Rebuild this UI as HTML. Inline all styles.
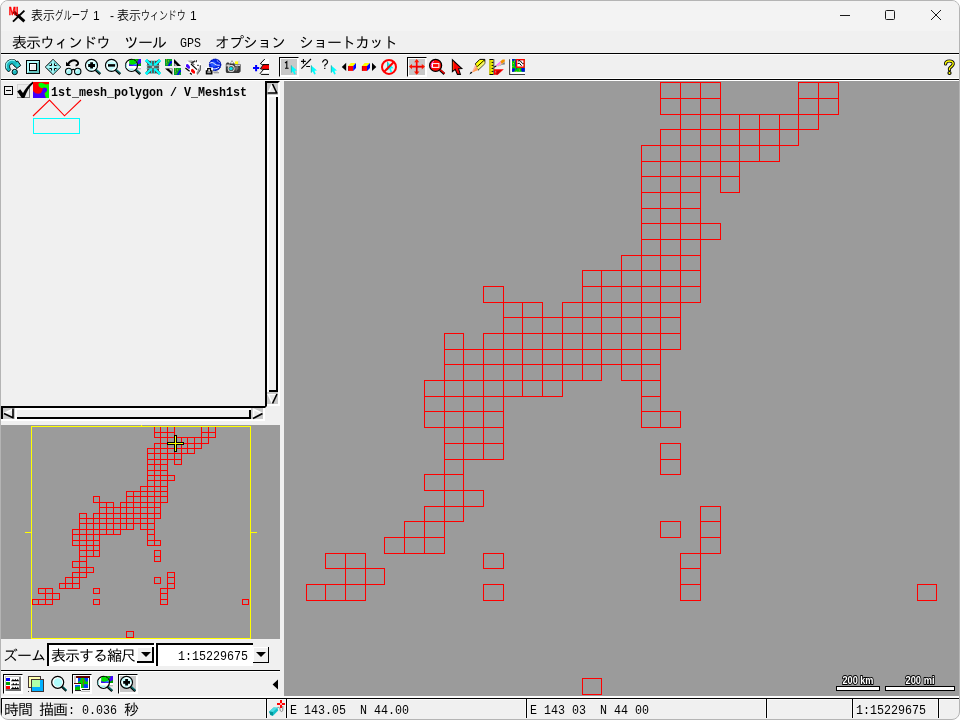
<!DOCTYPE html>
<html lang="ja"><head><meta charset="utf-8"><title>表示グループ 1 - 表示ウィンドウ 1</title>
<style>
html,body{margin:0;padding:0;background:#fff;}
body{width:960px;height:720px;overflow:hidden;position:relative;font-family:"Liberation Sans",sans-serif;}
#win{position:absolute;left:0;top:0;width:958px;height:718px;border:1px solid #b4b4b4;border-radius:8px;background:#f0f0f0;overflow:hidden;}
.a{position:absolute;}
.g{position:absolute;font-family:"Liberation Mono","IPAGothic",monospace;font-size:15px;line-height:15px;letter-spacing:-1px;white-space:pre;color:#000;}
.l{display:inline-block;font-size:13px;letter-spacing:0;transform:translateY(-1px) scaleX(.8974);transform-origin:0 50%;}
.t{position:absolute;font-family:"Liberation Sans","Noto Sans CJK JP",sans-serif;font-weight:350;font-size:12px;line-height:16px;white-space:pre;color:#000;}
svg{position:absolute;overflow:visible;}
.ic{position:absolute;width:16px;height:16px;}
.k{display:inline-block;transform-origin:0 50%;}
.pr{position:absolute;width:18px;height:18px;background:#fff;border-left:1px solid #000;border-top:1px solid #000;border-right:1px solid #fff;border-bottom:1px solid #fff;box-sizing:content-box;}
.pr i{position:absolute;left:1px;top:1px;width:16px;height:16px;background:#c8c8c8;}
</style></head><body>
<div id="win">
<!-- coordinates inside #win are offset by 1px (border) : use wrapper shifted -1 -->
<div class="a" id="o" style="left:-1px;top:-1px;width:960px;height:720px;will-change:transform;">

<!-- title bar -->
<div class="a" style="left:0;top:0;width:960px;height:31px;background:#f3f3f3;"></div>
<div class="t" style="left:31px;top:8px;">表示<span class="k" style="transform:scaleX(.70)">グループ</span></div><div class="t" style="left:93px;top:8px;">1</div><div class="t" style="left:110px;top:8px;">-</div><div class="t" style="left:117px;top:8px;">表示<span class="k" style="transform:scaleX(.745)">ウィンドウ</span></div><div class="t" style="left:190px;top:8px;">1</div>
<svg style="left:8px;top:6px;" width="18" height="18" viewBox="0 0 18 18">
 <path d="M5.5 5.6 L16.4 15.4" stroke="#000" stroke-width="2.8" fill="none"/><path d="M16.4 4.6 L5 15.6" stroke="#000" stroke-width="1.9" fill="none"/>
 <text x="0.8" y="8.9" font-family="Liberation Sans, sans-serif" font-weight="bold" font-size="11" fill="#f00" stroke="#f00" stroke-width=".3" textLength="9.6" lengthAdjust="spacingAndGlyphs">MI</text>
</svg>
<svg style="left:835px;top:5px;" width="115" height="22" viewBox="0 0 115 22" fill="none" stroke="#1a1a1a" stroke-width="1">
 <path d="M5 10.5H15"/>
 <rect x="50.5" y="5.5" width="9" height="9" rx="1"/>
 <path d="M96 5L106 15M106 5L96 15"/>
</svg>

<!-- menu bar -->
<div class="g" style="left:12px;top:37px;">表示ウィンドウ</div>
<div class="g" style="left:124px;top:37px;">ツール</div>
<div class="g" style="left:180px;top:37px;"><span class="l">GPS</span></div>
<div class="g" style="left:215px;top:37px;">オプション</div>
<div class="g" style="left:299px;top:37px;">ショートカット</div>

<!-- toolbar frame -->
<div class="a" style="left:1px;top:53px;width:958px;height:1px;background:#000;"></div>
<div class="a" style="left:1px;top:54px;width:958px;height:1px;background:#fff;"></div>
<div class="a" style="left:1px;top:78px;width:958px;height:1px;background:#fff;"></div>
<div class="a" style="left:1px;top:79px;width:958px;height:1px;background:#000;"></div>
<div class="a" style="left:1px;top:80px;width:958px;height:1px;background:#fff;"></div>
<div class="pr" style="left:279px;top:57px;"><i></i></div>
<div class="pr" style="left:407px;top:57px;"><i></i></div>

<!-- layer list -->
<svg style="left:0;top:81px;" width="284" height="345" viewBox="0 81 284 345" shape-rendering="crispEdges">
 <!-- tree box -->
 <rect x="4.5" y="86.5" width="8" height="8" fill="#f0f0f0" stroke="#000"/>
 <path d="M6 90.5H11" stroke="#000"/>
 <!-- checkbox -->
 <rect x="17" y="84" width="13" height="14" fill="#ececec"/>
 <path d="M17.5 97V84.5H30" stroke="#d4d4d4" fill="none"/>
 <path d="M17 97.5H29.5V85" stroke="#808080" fill="none"/>
 <path d="M17.2 91.6 L20.2 89.2 L23 93 C25.4 88.6 28.6 84.4 32.8 81.4 L33.2 83.6 C29.4 86.8 26.8 91.6 24.4 98 L21.8 98 Z" fill="#000" shape-rendering="auto"/>
 <!-- layer icon -->
 <g shape-rendering="auto">
 <rect x="33" y="82" width="16" height="16" fill="#f00"/>
 <path d="M33 91 C36 94.5 39 94 41 93 L42.5 90 C42 88.5 43.5 87.5 45 87.5 L47 88.5 L47 91 L44.5 93.5 L46 98 L33 98Z" fill="#4000ff"/>
 <path d="M38.5 84 C39.5 82.5 42 82.3 43.5 83.5 L45.5 84.5 L49 84 L49 98 L46 98 L44.5 93.5 L47 91 L47 88.5 L45 87.5 C43.5 87.5 42.5 88.5 41.5 88 C39.5 87.5 38 85.5 38.5 84Z" fill="#00ff00"/>
 </g>
 <!-- legend samples -->
 <path d="M33 116 L49.5 100 L64.5 115.8 L81 100" stroke="#f00" stroke-width="1.1" fill="none" shape-rendering="auto"/>
 <rect x="33.5" y="118.5" width="46" height="15" fill="none" stroke="#0ff"/>

 <!-- vertical scrollbar -->
 <rect x="265" y="81" width="15" height="325" fill="#fff"/>
 <rect x="265" y="81" width="13" height="323" fill="#000"/>
 <path d="M278 81 h2 l-2 2z" fill="#000" shape-rendering="auto"/>
 <rect x="267" y="83" width="11" height="321" fill="#c8c8c8"/>
 <!-- slider -->
 <rect x="267" y="95" width="11" height="297" fill="#fff"/>
 <rect x="269" y="97" width="9" height="295" fill="#000"/>
 <rect x="269" y="97" width="7" height="293" fill="#f0f0f0"/>
 <g shape-rendering="auto">
 <path d="M272.5 84 L268 93.5 H277Z" fill="#e8e8e8"/><path d="M272.5 84 L268 93.5" stroke="#fff" stroke-width="1.6"/>
 <path d="M272.5 84 L277 93.5 M267.5 93 H277.5" stroke="#000" stroke-width="1.6"/>
 <path d="M268 394 L272.5 403.5 L277 394Z" fill="#e8e8e8"/><path d="M268 394 L272.5 403.5" stroke="#fff" stroke-width="1.6"/>
 <path d="M267.5 394.5 H277.5" stroke="#fff" stroke-width="1.2"/>
 <path d="M277 394 L272.5 403.5" stroke="#000" stroke-width="1.6"/>
 </g>

 <!-- horizontal scrollbar -->
 <rect x="1" y="406" width="264" height="15" fill="#fff"/>
 <rect x="1" y="406" width="262" height="13" fill="#000"/>
 <path d="M263 406 h4 l-2 2 h-2z" fill="#000" shape-rendering="auto"/>
 <rect x="265" y="400" width="2" height="6" fill="#000"/>
 <rect x="3" y="408" width="260" height="11" fill="#c8c8c8"/>
 <rect x="15" y="408" width="236" height="11" fill="#fff"/>
 <rect x="17" y="410" width="234" height="9" fill="#000"/>
 <rect x="17" y="410" width="232" height="7" fill="#f0f0f0"/>
 <g shape-rendering="auto">
 <path d="M13.5 409 L4 413.5 L13.5 418Z" fill="#e8e8e8"/><path d="M13.5 409 L4 413.5" stroke="#fff" stroke-width="1.6"/>
 <path d="M4 413.5 L13.5 418 M13 408.5 V418.5" stroke="#000" stroke-width="1.6"/>
 <path d="M253 409 L262.5 413.5 L253 418.5Z" fill="#e8e8e8"/><path d="M253 409 L262.5 413.5 M253.5 408.5 V418" stroke="#fff" stroke-width="1.6"/>
 <path d="M262.5 413.5 L253 418.5" stroke="#000" stroke-width="1.6"/>
 </g>
</svg>
<div class="g" style="left:51px;top:86px;font-weight:bold;"><span class="l">1st_mesh_polygon / V_Mesh1st</span></div>

<!-- overview -->
<div class="a" style="left:1px;top:425px;width:279px;height:214px;background:#9b9b9b;"></div>
<svg style="left:1px;top:425px;" width="279" height="214" viewBox="0 0 279 214" shape-rendering="crispEdges">
 <path d="M153 1.5H174M200 1.5H215M153 7.5H174M200 7.5H215M153 12.5H215M153 18.5H208M146 23.5H201M146 28.5H194M146 34.5H181M146 39.5H167M173 39.5H181M146 45.5H167M146 50.5H174M146 55.5H174M139 61.5H167M125 66.5H167M92 71.5H99M125 71.5H167M92 77.5H113M119 77.5H167M98 82.5H160M78 88.5H86M92 88.5H160M78 93.5H160M78 98.5H154M71 104.5H133M139 104.5H154M71 109.5H120M146 109.5H154M71 115.5H99M146 115.5H160M71 120.5H99M146 120.5H160M78 125.5H99M153 125.5H160M78 131.5H99M153 131.5H160M71 136.5H86M153 136.5H160M71 142.5H93M71 147.5H93M166 147.5H174M64 152.5H86M153 152.5H160M166 152.5H174M58 158.5H79M153 158.5H160M166 158.5H174M37 163.5H52M58 163.5H79M92 163.5H99M159 163.5H174M37 168.5H59M92 168.5H99M159 168.5H167M31 174.5H59M92 174.5H99M159 174.5H167M241 174.5H248M31 179.5H52M92 179.5H99M159 179.5H167M241 179.5H248M125 206.5H133M125 212.5H133M31.5 174V180M37.5 163V169M37.5 174V180M44.5 163V180M51.5 163V180M58.5 158V164M58.5 168V175M64.5 152V164M71.5 104V121M71.5 136V143M71.5 147V164M78.5 88V164M85.5 88V153M92.5 71V78M92.5 88V132M92.5 142V148M92.5 163V169M92.5 174V180M98.5 71V132M98.5 163V169M98.5 174V180M105.5 77V110M112.5 77V110M119.5 77V110M125.5 66V105M125.5 206V213M132.5 66V105M132.5 206V213M139.5 61V105M146.5 23V121M153.5 1V13M153.5 18V121M153.5 125V137M153.5 152V159M159.5 1V94M159.5 115V121M159.5 125V137M159.5 152V159M159.5 163V180M166.5 1V78M166.5 147V180M173.5 1V40M173.5 50V56M173.5 147V164M180.5 12V40M186.5 12V29M193.5 12V29M200.5 1V24M207.5 1V19M214.5 1V13M241.5 174V180M247.5 174V180" stroke="#f00" fill="none"/>
 <path d="M30.5 1V214M249.5 1V214M30 1.5H250M30 213.5H250M24 107.5H30M250 107.5H256M140.5 0V1M154.5 213V214" stroke="#ff0" fill="none"/>
 <path d="M173 10H176V17H183V20H176V27H173V20H166V17H173Z" fill="#000"/>
 <path d="M174 11H175V18H182V19H175V26H174V19H167V18H174Z" fill="#ff0"/>
</svg>

<!-- zoom row -->
<div class="g" style="left:3px;top:650px;">ズーム</div>
<svg style="left:0;top:640px;" width="284" height="60" viewBox="0 640 284 60" shape-rendering="crispEdges">
 <!-- combo1 -->
 <rect x="47" y="643" width="109" height="23" fill="#fff"/>
 <rect x="47" y="643" width="107" height="23" fill="#000"/>
 <rect x="49" y="645" width="105" height="21" fill="#fff"/>
 <rect x="137" y="647" width="17" height="16" fill="#000"/>
 <rect x="137" y="647" width="15" height="14" fill="#fff"/>
 <rect x="138" y="648" width="14" height="13" fill="#f0f0f0"/>
 <path d="M141 652H151L146 657Z" fill="#000" shape-rendering="auto"/>
 <!-- combo2 -->
 <rect x="156" y="643" width="97" height="23" fill="#000"/>
 <rect x="158" y="645" width="95" height="21" fill="#fff"/>
 <rect x="253" y="647" width="16" height="16" fill="#000"/>
 <rect x="253" y="647" width="15" height="15" fill="#fff"/>
 <rect x="254" y="648" width="14" height="14" fill="#f0f0f0"/>
 <path d="M256 652H266L261 657Z" fill="#000" shape-rendering="auto"/>
 <!-- separator -->
 <rect x="1" y="670" width="279" height="1" fill="#000"/>
 <rect x="1" y="671" width="279" height="1" fill="#fff"/>
 <path d="M278 679.5 V689.5 L272.6 684.5Z" fill="#000" shape-rendering="auto"/>
</svg>
<div class="g" style="left:51px;top:650px;">表示する縮尺</div>
<div class="g" style="left:178px;top:650px;"><span class="l">1:15229675</span></div>
<div class="pr" style="left:3px;top:674px;"></div>
<div class="pr" style="left:72px;top:674px;"></div>
<div class="pr" style="left:118px;top:674px;"><i></i></div>

<!-- map -->
<div class="a" style="left:284px;top:81px;width:675px;height:615px;background:#9b9b9b;"></div>
<svg style="left:284px;top:81px;" width="675" height="615" viewBox="0 0 675 615" shape-rendering="crispEdges">
 <path d="M376 1.5H437M514 1.5H555M376 17.5H437M514 17.5H555M376 33.5H555M376 48.5H535M357 64.5H515M357 80.5H496M357 95.5H456M357 111.5H417M436 111.5H456M357 127.5H417M357 142.5H437M357 158.5H437M337 174.5H417M298 189.5H417M199 205.5H220M298 205.5H417M199 221.5H259M278 221.5H417M219 236.5H397M160 252.5H180M199 252.5H397M160 268.5H397M160 283.5H377M140 299.5H318M337 299.5H377M140 315.5H279M357 315.5H377M140 330.5H220M357 330.5H397M140 346.5H220M357 346.5H397M160 362.5H220M376 362.5H397M160 378.5H220M376 378.5H397M140 393.5H180M376 393.5H397M140 409.5H200M140 425.5H200M416 425.5H437M120 440.5H180M376 440.5H397M416 440.5H437M100 456.5H161M376 456.5H397M416 456.5H437M41 472.5H82M100 472.5H161M199 472.5H220M396 472.5H437M41 487.5H101M199 487.5H220M396 487.5H417M22 503.5H101M199 503.5H220M396 503.5H417M633 503.5H653M22 519.5H82M199 519.5H220M396 519.5H417M633 519.5H653M298 597.5H318M298 613.5H318M22.5 503V520M41.5 472V488M41.5 503V520M61.5 472V520M81.5 472V520M100.5 456V473M100.5 487V504M120.5 440V473M140.5 299V347M140.5 393V410M140.5 425V473M160.5 252V473M179.5 252V441M199.5 205V222M199.5 252V379M199.5 409V426M199.5 472V488M199.5 503V520M219.5 205V379M219.5 472V488M219.5 503V520M238.5 221V316M258.5 221V316M278.5 221V316M298.5 189V300M298.5 597V614M317.5 189V300M317.5 597V614M337.5 174V300M357.5 64V347M376.5 1V34M376.5 48V347M376.5 362V394M376.5 440V457M396.5 1V269M396.5 330V347M396.5 362V394M396.5 440V457M396.5 472V520M416.5 1V222M416.5 425V520M436.5 1V112M436.5 142V159M436.5 425V473M455.5 33V112M475.5 33V81M495.5 33V81M514.5 1V65M534.5 1V49M554.5 1V34M633.5 503V520M652.5 503V520" stroke="#f00" fill="none"/>
 <rect x="552.5" y="605.5" width="43" height="4" fill="#fff" stroke="#000"/>
 <rect x="601.5" y="605.5" width="69" height="4" fill="#fff" stroke="#000"/>
 <g font-family="Liberation Sans, sans-serif" font-weight="bold" font-size="11" text-anchor="middle" shape-rendering="auto" fill="#fff" stroke="#000" stroke-width="2" paint-order="stroke" stroke-linejoin="round">
  <text x="574" y="602.5" textLength="31" lengthAdjust="spacingAndGlyphs">200 km</text>
  <text x="636" y="602.5" textLength="29" lengthAdjust="spacingAndGlyphs">200 mi</text>
 </g>
</svg>

<!-- status bar -->
<div class="a" style="left:1px;top:696px;width:958px;height:2px;background:#fcfcfc;"></div>
<div class="a" style="left:1px;top:699px;width:958px;height:1px;background:#fafafa;"></div>
<div class="a" style="left:1px;top:698px;width:958px;height:1px;background:#000;"></div>
<div class="a" style="left:1px;top:699px;width:1px;height:19px;background:#000;"></div>
<div class="a" style="left:2px;top:699px;width:1px;height:19px;background:#fafafa;"></div>
<div class="a" style="left:265px;top:699px;width:3px;height:19px;background:#fafafa;"></div>
<div class="a" style="left:266px;top:699px;width:1px;height:19px;background:#000;"></div>
<div class="a" style="left:285px;top:699px;width:3px;height:19px;background:#fafafa;"></div>
<div class="a" style="left:286px;top:699px;width:1px;height:19px;background:#000;"></div>
<div class="a" style="left:525px;top:699px;width:3px;height:19px;background:#fafafa;"></div>
<div class="a" style="left:526px;top:699px;width:1px;height:19px;background:#000;"></div>
<div class="a" style="left:765px;top:699px;width:3px;height:19px;background:#fafafa;"></div>
<div class="a" style="left:766px;top:699px;width:1px;height:19px;background:#000;"></div>
<div class="a" style="left:851px;top:699px;width:3px;height:19px;background:#fafafa;"></div>
<div class="a" style="left:852px;top:699px;width:1px;height:19px;background:#000;"></div>
<div class="a" style="left:937px;top:699px;width:3px;height:19px;background:#fafafa;"></div>
<div class="a" style="left:938px;top:699px;width:1px;height:19px;background:#000;"></div>
<div class="g" style="left:4px;top:704px;">時間</div><div class="g" style="left:39px;top:704px;">描画</div><div class="g" style="left:68px;top:704px;"><span class="l">:</span></div>
<div class="g" style="left:82px;top:704px;"><span class="l">0.036</span></div>
<div class="g" style="left:124px;top:704px;">秒</div>
<div class="g" style="left:290px;top:704px;"><span class="l">E 143.05  N 44.00</span></div>
<div class="g" style="left:530px;top:704px;"><span class="l">E 143 03  N 44 00</span></div>
<div class="g" style="left:856px;top:704px;"><span class="l">1:15229675</span></div>

<!-- ===== toolbar icons (16x16 at y=59) ===== -->
<!-- 1 redraw -->
<svg class="ic" style="left:5px;top:59px" viewBox="0 0 16 16">
 <path d="M3.6 13 L1.2 10.4 C-0.2 7.4 0.2 3.8 2.8 1.8 C5.2 0 8.6 0 10.6 1.4 L11.8 2.8 L12.6 1.8 L15.8 6.5 L11.6 9.6 L10.8 8 L9 7 C8.6 5.2 6.8 4.2 5.4 5.4 C4.2 6.6 4.4 8.8 5.8 10.6 Z" fill="#fff" stroke="#fff" stroke-width="2.4" stroke-linejoin="round"/>
 <circle cx="9.7" cy="13" r="3.6" fill="#fff"/>
 <path d="M3.6 13 L1.2 10.4 C-0.2 7.4 0.2 3.8 2.8 1.8 C5.2 0 8.6 0 10.6 1.4 L11.8 2.8 L12.6 1.8 L15.8 6.5 L11.6 9.6 L10.8 8 L9 7 C8.6 5.2 6.8 4.2 5.4 5.4 C4.2 6.6 4.4 8.8 5.8 10.6 Z" fill="#18b8c0" stroke="#000" stroke-width=".9" stroke-linejoin="round"/>
 <path d="M1.6 9.4 C0.8 6.4 1.6 3.6 3.8 2.2 C5.8 1 8.2 1 9.8 2" stroke="#8cf0f0" stroke-width="1.3" fill="none"/>
 <path d="M12.6 3 L14.6 6.4 L11.8 8.4 L11.4 6.6 L9.8 6.4 L11.8 4.6Z" fill="#30d0d0"/>
 <circle cx="9.7" cy="13" r="2.7" fill="#18b8c0" stroke="#000" stroke-width=".9"/>
 <path d="M7.7 13 L9.6 10.9 L11 11 Z" fill="#a0f4f4"/>
</svg>
<!-- 2 full view -->
<svg class="ic" style="left:25px;top:59px" viewBox="0 0 16 16" shape-rendering="crispEdges">
 <rect x="1" y="1" width="14" height="14" fill="#000"/>
 <rect x="2" y="2" width="12" height="12" fill="#66c4c0"/>
 <path d="M2 2H14L12 4H4V12L2 14Z" fill="#b4fcfc"/>
 <rect x="4" y="4" width="8" height="8" fill="#000"/>
 <rect x="5" y="5" width="6" height="6" fill="#fff"/>
 <rect x="6" y="6" width="5" height="5" fill="#f0f0f0"/>
</svg>
<!-- 3 pan diamond -->
<svg class="ic" style="left:45px;top:59px" viewBox="0 0 16 16">
 <path d="M8 0.4 L15.7 8 L8 15.6 L0.3 8Z" fill="#84e8e8" stroke="#000" stroke-width="1"/>
 <path d="M8 1 L15 8 L8 15Z" fill="#68d0d0"/><path d="M8 1.5 L8 14.5 M1.5 8 L14.5 8" stroke="#b4fcfc" stroke-width="1.4"/>
 <g fill="none" stroke="#000" stroke-width="1">
  <path d="M4.5 6.5 H6.5 V4.5"/><path d="M11.5 6.5 H9.5 V4.5"/><path d="M4.5 9.5 H6.5 V11.5"/><path d="M11.5 9.5 H9.5 V11.5"/>
 </g>
 <g fill="#f0f0f0"><rect x="5" y="5" width="1" height="1"/><rect x="10" y="5" width="1" height="1"/><rect x="5" y="10" width="1" height="1"/><rect x="10" y="10" width="1" height="1"/></g>
</svg>
<!-- 4 previous view -->
<svg class="ic" style="left:65px;top:59px" viewBox="0 0 16 16">
 <path d="M3 5.6 C4.5 1.2 10 0 12.4 2.6 C14 4.4 13 6.2 10.6 6.6" fill="none" stroke="#000" stroke-width="1.9"/>
 <path d="M1 2.8 V7 H5.8Z" fill="#000"/>
 <path d="M6 11.8 C7 9.8 9.4 9.8 10.4 11.8" fill="none" stroke="#000" stroke-width="1.3"/>
 <circle cx="3.7" cy="12.4" r="3.2" fill="#a4f4f4" stroke="#000" stroke-width="1.1"/>
 <circle cx="12.7" cy="12.4" r="3.2" fill="#a4f4f4" stroke="#000" stroke-width="1.1"/>
 <path d="M2.2 12.4 A1.6 1.6 0 0 1 3.8 10.8 M11.2 12.4 A1.6 1.6 0 0 1 12.8 10.8" stroke="#fff" stroke-width="1" fill="none"/>
</svg>
<!-- 5 zoom in -->
<svg class="ic" style="left:85px;top:59px" viewBox="0 0 16 16">
 <path d="M10.6 10.8 L15.2 15.2" stroke="#000" stroke-width="2.4"/>
 <path d="M11.3 10.5 L15.6 14.6" stroke="#10a8a8" stroke-width="1.5" stroke-dasharray="1 .5"/>
 <circle cx="6.5" cy="6.4" r="6" fill="#c0fcfc" stroke="#000" stroke-width="1.2"/>
 <circle cx="6.5" cy="6.4" r="4.4" fill="none" stroke="#fff" stroke-width="1.2" stroke-dasharray="6 3"/>
 <path d="M3.2 6.5 H10 M6.6 3.2 V9.6" stroke="#000" stroke-width="2.8"/>
</svg>
<!-- 6 zoom out -->
<svg class="ic" style="left:105px;top:59px" viewBox="0 0 16 16">
 <path d="M10.6 10.8 L15.2 15.2" stroke="#000" stroke-width="2.4"/>
 <path d="M11.3 10.5 L15.6 14.6" stroke="#10a8a8" stroke-width="1.5" stroke-dasharray="1 .5"/>
 <circle cx="6.5" cy="6.4" r="6" fill="#c0fcfc" stroke="#000" stroke-width="1.2"/>
 <circle cx="6.5" cy="6.4" r="4.4" fill="none" stroke="#fff" stroke-width="1.2" stroke-dasharray="6 3"/>
 <path d="M3 6.4 H10.1" stroke="#000" stroke-width="2.5"/>
</svg>
<!-- 7 zoom to layer -->
<svg class="ic" style="left:125px;top:59px" viewBox="0 0 16 16">
 <rect x="9" y="0" width="7" height="7" fill="#00a000"/>
 <path d="M16 0 V4 L13 5.5 L12 3 L14 0Z" fill="#4000ff"/>
 <path d="M9.5 1 L11 0 L12.5 2 L11 4Z" fill="#00e000"/>
 <rect x="9" y="7" width="7" height="2.4" fill="#fff"/>
 <rect x="10" y="9.4" width="6" height=".8" fill="#909090"/>
 <path d="M10.6 10.8 L15.2 15.2" stroke="#000" stroke-width="2.4"/>
 <path d="M11.3 10.5 L15.6 14.6" stroke="#10a8a8" stroke-width="1.5" stroke-dasharray="1 .5"/>
 <circle cx="6.5" cy="6.4" r="6" fill="#fff" stroke="#000" stroke-width="1.2"/>
 <path d="M4.2 1.4 C6 0.6 8.5 0.6 10.3 2.2 C11.6 3.6 12 5 11.9 7 L4.2 7Z" fill="#00e000"/>
 <path d="M4.2 4.5 C5.5 6 7.5 6.2 9.5 5.2 L11 4.6 L11.9 7 H4.2Z" fill="#4000ff"/>
 <path d="M7 5.8 C8.5 6 10 5.4 11 4.4 L11.6 5.8 C10 6.6 8.4 6.8 7 5.8Z" fill="#20a0ff"/>
 <path d="M1.4 4.5 C1 6 1 7.5 1.6 9 M3 10.2 H8.6" stroke="#7ce0e0" stroke-width="1" fill="none"/>
 <path d="M2.4 9.2 C3.4 11.4 6.2 12.2 8.6 11.4 C6.5 10.8 4 10.6 2.4 9.2Z" fill="#c0fcfc"/>
</svg>
<!-- 8 zoom to extents arrows -->
<svg class="ic" style="left:145px;top:59px" viewBox="0 0 16 16">
 <rect x="2.2" y="1.8" width="11.8" height="12.6" fill="#5c4040"/>
 <path d="M1.4 1.4 L14.6 14.6 M14.6 1.4 L1.4 14.6" stroke="#5c4040" stroke-width="3"/>
 <g transform=""><path d="M0.9 0.9 L6.8 6.8" stroke="#00ffff" stroke-width="2.3"/><path d="M0.4 2.4 L2.4 0.4" stroke="#00ffff" stroke-width="1.4"/><rect x="6.2" y="1.6" width="1" height="5.6" fill="#00ffff"/><rect x="1.6" y="6.2" width="5.6" height="1" fill="#50b8b8"/></g><g transform="translate(16,0) scale(-1,1)"><path d="M0.9 0.9 L6.8 6.8" stroke="#00ffff" stroke-width="2.3"/><path d="M0.4 2.4 L2.4 0.4" stroke="#00ffff" stroke-width="1.4"/><rect x="6.2" y="1.6" width="1" height="5.6" fill="#00ffff"/><rect x="1.6" y="6.2" width="5.6" height="1" fill="#50b8b8"/></g><g transform="translate(0,16) scale(1,-1)"><path d="M0.9 0.9 L6.8 6.8" stroke="#00ffff" stroke-width="2.3"/><path d="M0.4 2.4 L2.4 0.4" stroke="#00ffff" stroke-width="1.4"/><rect x="6.2" y="1.6" width="1" height="5.6" fill="#00ffff"/><rect x="1.6" y="6.2" width="5.6" height="1" fill="#50b8b8"/></g><g transform="translate(16,16) scale(-1,-1)"><path d="M0.9 0.9 L6.8 6.8" stroke="#00ffff" stroke-width="2.3"/><path d="M0.4 2.4 L2.4 0.4" stroke="#00ffff" stroke-width="1.4"/><rect x="6.2" y="1.6" width="1" height="5.6" fill="#00ffff"/><rect x="1.6" y="6.2" width="5.6" height="1" fill="#50b8b8"/></g>
 <rect x="7.2" y="7.2" width="1.6" height="1.6" fill="#fff"/>
</svg>
<!-- 9 tiles -->
<svg class="ic" style="left:165px;top:59px" viewBox="0 0 16 16">
 <rect x="0" y="0" width="7" height="7" fill="#00a030"/>
 <path d="M7 2 L5.2 2.6 L4 5 L2.6 7 H4.6 L5.4 5.2 L7 3.6Z" fill="#0000ff"/>
 <path d="M0 0 H3 L0 4Z" fill="#009020"/>
 <g fill="#d0c000"><rect x="1" y="0.4" width="1" height="1"/><rect x="3" y="1.4" width="1" height="1"/><rect x="1" y="2.6" width="1" height="1"/><rect x="1.4" y="4.6" width="1" height="1"/></g>
 <g transform="translate(9,9)">
 <rect x="0" y="0" width="7" height="7" fill="#00a030"/>
 <path d="M7 2 L5.2 2.6 L4 5 L2.6 7 H4.6 L5.4 5.2 L7 3.6Z" fill="#0000ff"/>
 <path d="M0 0 H3 L0 4Z" fill="#009020"/>
 <g fill="#d0c000"><rect x="1" y="0.4" width="1" height="1"/><rect x="3" y="1.4" width="1" height="1"/><rect x="1" y="2.6" width="1" height="1"/><rect x="1.4" y="4.6" width="1" height="1"/></g>
 </g>
 <path d="M9 0 L16 7 H9Z" fill="#000"/>
 <path d="M9.6 4.4 L12.2 6.8 H9.6Z" fill="#fff" stroke="#b0b0b0" stroke-width=".5"/>
 <path d="M0 9.4 H7.4 V16Z" fill="#000"/>
 <path d="M4.2 9.8 H6.8 V12.6Z" fill="#fff" stroke="#b0b0b0" stroke-width=".5"/>
</svg>
<!-- 10 3D glasses -->
<svg class="ic" style="left:185px;top:59px" viewBox="0 0 16 16">
 <path d="M0.2 6.2 L2.4 2 L7.4 0.4 L11.6 1 L16 5 L16 12 L12.6 16 L6.4 16 L0.2 9.4Z" fill="#fff"/>
 <path d="M2.4 1.8 L7 1.2 L9.4 3.2 L6.2 4.6Z" fill="#a8a8a8"/>
 <path d="M6.4 4.2 L10 1.8" stroke="#303030" stroke-width="1.6"/>
 <path d="M6 5 L12 10.6" stroke="#000" stroke-width="1.1"/>
 <path d="M7.6 4.2 L9.2 5.8 M11.4 1.2 L11.2 3.2 M12.2 6.3 L13.8 6.3" stroke="#000" stroke-width="1"/>
 <path d="M1 5.6 L2.8 5 L5 7.4 L5 9.6 L3.2 9.8 L1 7.6Z" fill="#4808ff"/>
 <path d="M6 10.4 L7.8 9.8 L10 12.2 L10 14.4 L8.2 14.6 L6 12.4Z" fill="#ff0000"/>
 <path d="M0.4 9 L4.6 12.2" stroke="#000" stroke-width="1.3"/>
 <path d="M5 14 L6.8 15.6" stroke="#000" stroke-width="1.3"/>
 <path d="M15.4 6.2 L15.2 11 L12 15.4" stroke="#505050" stroke-width="1.2" fill="none"/>
 <path d="M13.6 9.6 C13.8 11.6 13 13.4 11.8 14.6" stroke="#909090" stroke-width="1.4" fill="none"/>
</svg>
<!-- 11 globe / print -->
<svg class="ic" style="left:205px;top:59px" viewBox="0 0 16 16">
 <path d="M7 13 H12.6 L13.8 13.8 H9" stroke="#909090" stroke-width="1" fill="none"/>
 <circle cx="10.1" cy="5.8" r="6.1" fill="#0828e8"/>
 <circle cx="10.1" cy="5.8" r="5.7" fill="none" stroke="#001088" stroke-width=".9" stroke-dasharray="1.4 1"/>
 <circle cx="8.6" cy="5.2" r="2.6" fill="#2858ff"/>
 <path d="M4.8 4.4 C6.4 3 8 3.4 9.2 4.6 C10.4 5.8 12 6.4 14.8 6.2 M7.4 9.8 C9.6 10.2 12.4 9.6 14 8.2" stroke="#e8ecff" stroke-width="1" fill="none"/>
 <path d="M11.8 1.4 L13.2 2.6 M13.6 3 L14.6 3.6" stroke="#c8d4ff" stroke-width=".9" fill="none"/>
 <rect x="0.2" y="8.4" width="7.8" height="7.6" fill="#fff"/>
 <path d="M2.7 9.6 H5.5 V11.8 H6.9 V14.8 H1.3 V11.8 H2.7Z" fill="#fff" stroke="#000" stroke-width="1.2"/>
 <path d="M2.4 13.3 H5.8" stroke="#fff" stroke-width=".9"/>
 <path d="M1.3 12.6 H6.9 V14.8 H1.3Z" fill="#000"/>
 <path d="M2.3 13.6 H5.9" stroke="#d0d0d0" stroke-width=".8"/>
</svg>
<!-- 12 camera -->
<svg class="ic" style="left:225px;top:59px" viewBox="0 0 16 16">
 <path d="M0.8 5 L2 3.4 L3.6 3.4 L4.4 4.6 L5.2 4.6 L7 1.2 L9 4.4 L15.6 5.2 L15.6 12.6 L14 14 L1.6 14 L0.8 12.6Z" fill="#383838"/>
 <path d="M5.6 4.6 L7 1.8 L8.6 4.6Z" fill="#f4f4f4"/>
 <rect x="10" y="2.4" width="3" height="2.6" fill="#ffff00"/>
 <path d="M13.4 2 L14.4 1.2 L14.4 5 L13.4 5Z" fill="#c0c0c0"/>
 <path d="M1.4 5.6 H5 L4 7.4 H1.4Z M9.4 5.4 H15 V7 H10.4Z" fill="#d0d0d0"/>
 <circle cx="6.2" cy="9.6" r="3.5" fill="#e8e8e8"/>
 <circle cx="6.2" cy="9.6" r="2.6" fill="#585858"/>
 <circle cx="6" cy="9.6" r="1.7" fill="#00e8f0"/>
 <path d="M9.5 8 L13 6.6 L13.4 9.4 L11 12.6Z" fill="#707070"/>
</svg>
<!-- 13 add layer -->
<svg class="ic" style="left:253px;top:59px" viewBox="0 0 16 16">
 <path d="M0 9 H6.2 M3.1 6 V12.2" stroke="#0000ff" stroke-width="2"/>
 <path d="M11.8 0 H16 V15 H8 L7.2 14.4 L10.6 10.6 L7.4 9.6 L10.4 5.6 L7.2 4.6Z" fill="#fff"/>
 <path d="M10.6 5.6 H16 V10.4 H10.6 L7.6 9.6Z" fill="#f00"/>
 <path d="M11.8 0 L7.4 4.6 L9.4 5.6 H16 M10.4 5.6 L7.4 9.7 L9.6 10.4 H16 M10.6 10.4 L7.2 14.4 L8.2 15.4 H16" stroke="#000" stroke-width="1" fill="none"/>
</svg>
<!-- 14 select single -->
<svg class="ic" style="left:281px;top:59px" viewBox="0 0 16 16">
 <path d="M4 4 L5.8 2.6 V9 M4 9.2 H7.6" stroke="#000" stroke-width="1.1" fill="none"/>
 <path d="M10 6.2 V13.8 L11.8 12.4 L13.2 15.6 L14.8 15 L13.4 11.8 L16 11.6Z" fill="#00ffff"/>
 <path d="M10.3 6.4 V13.6" stroke="#38a8a8" stroke-width=".9"/>
</svg>
<!-- 15 select +/- -->
<svg class="ic" style="left:301px;top:59px" viewBox="0 0 16 16">
 <path d="M0 2.4 H4.8 M2.4 0 V4.8 M10 0 L0.4 9.6 M5.2 7.5 H9" stroke="#000" stroke-width="1.1" fill="none"/>
 <path d="M10 6.2 V13.8 L11.8 12.4 L13.2 15.6 L14.8 15 L13.4 11.8 L16 11.6Z" fill="#00ffff"/>
 <path d="M10.3 6.4 V13.6" stroke="#38a8a8" stroke-width=".9"/>
</svg>
<!-- 16 query -->
<svg class="ic" style="left:321px;top:59px" viewBox="0 0 16 16">
 <path d="M1.4 3.4 L2.6 1.4 L4.2 0.6 L5.8 1.2 L6.6 2.8 L6 4.4 L3.8 6.2 V7.4" stroke="#000" stroke-width="1.1" fill="none"/>
 <rect x="3.2" y="8.8" width="1.2" height="1.2" fill="#000"/>
 <path d="M10 6.2 V13.8 L11.8 12.4 L13.2 15.6 L14.8 15 L13.4 11.8 L16 11.6Z" fill="#00ffff"/>
 <path d="M10.3 6.4 V13.6" stroke="#38a8a8" stroke-width=".9"/>
</svg>
<!-- 17 prev cube -->
<svg class="ic" style="left:341px;top:59px" viewBox="0 0 16 16">
 <path d="M0.8 7.9 L5.2 3.8 V12Z" fill="#000"/>
 <rect x="7.2" y="7" width="5" height="4.9" fill="#f00"/>
 <path d="M7.2 7 L9.8 4 H15 L12.2 7Z" fill="#ff0"/>
 <path d="M12.2 7 L15 4 V9 L12.2 11.9Z" fill="#00f"/>
 <path d="M7.5 7.2 V11.8" stroke="#a00000" stroke-width=".7"/>
</svg>
<!-- 18 next cube -->
<svg class="ic" style="left:361px;top:59px" viewBox="0 0 16 16">
 <path d="M15.3 7.9 L11 3.8 V12Z" fill="#000"/>
 <rect x="1" y="7" width="5" height="4.9" fill="#f00"/>
 <path d="M1 7 L3.6 4 H9 L6 7Z" fill="#ff0"/>
 <path d="M6 7 L9 4 V9 L6 11.9Z" fill="#00f"/>
 <path d="M1.3 7.2 V11.8" stroke="#a00000" stroke-width=".7"/>
</svg>
<!-- 19 no select -->
<svg class="ic" style="left:381px;top:59px" viewBox="0 0 16 16">
 <path d="M6.3 2.4 V11.4 L8.2 10 L9.6 13.4 L11.2 12.8 L9.8 9.4 L12.6 9.2Z" fill="#00ffff"/>
 <path d="M6.6 2.8 V11" stroke="#38a8a8" stroke-width=".9"/>
 <circle cx="8" cy="7.9" r="7" fill="none" stroke="#f00" stroke-width="2"/>
 <path d="M12.8 3 L3.2 12.8" stroke="#f00" stroke-width="2"/>
</svg>
<!-- 20 pan arrows -->
<svg class="ic" style="left:409px;top:59px" viewBox="0 0 16 16">
 <path d="M1.5 7.6 H14.5 M7.7 1.5 V14.5" stroke="#f00" stroke-width="1.7"/>
 <path d="M7.7 0 L10.2 3.2 H5.2Z M7.7 15.8 L10.4 12.4 H5Z M0 7.6 L3 5 V10.2Z M16 7.6 L12.8 5 V10.4Z" fill="#ff1800"/>
 <path d="M7.7 8 V14 M8 7.9 H14" stroke="#c00000" stroke-width=".6"/>
</svg>
<!-- 21 zoom box -->
<svg class="ic" style="left:429px;top:59px" viewBox="0 0 16 16">
 <path d="M10.8 10.8 L15.4 15" stroke="#000" stroke-width="2.4"/>
 <path d="M11 10.4 L15.6 14.4" stroke="#f00" stroke-width="1.3"/>
 <circle cx="6.6" cy="6.4" r="6" fill="#ff0800" stroke="#000" stroke-width="1.3"/>
 <path d="M2.6 8.6 C1.6 6 3 3 5 2.4" stroke="#ff60ff" stroke-width="1" fill="none"/>
 <rect x="3.5" y="4.6" width="6.4" height="3.8" fill="none" stroke="#fff" stroke-width="1"/>
</svg>
<!-- 22 red pointer -->
<svg class="ic" style="left:449px;top:59px" viewBox="0 0 16 16">
 <path d="M3.4 0.8 V12.6 L6.2 10.4 L8.4 15.4 H11.4 L9.6 9.8 L12.8 9.6Z" fill="#f00" stroke="#000" stroke-width="1.1" stroke-linejoin="miter"/>
 <path d="M4.3 2.6 V11" stroke="#ff5000" stroke-width=".9"/>
</svg>
<!-- 23 pencil -->
<svg class="ic" style="left:469px;top:59px" viewBox="0 0 16 16">
 <path d="M6.4 4.8 L10.8 0.4 L15.8 0.4 L15.8 4.6 L9 11.2 L7.4 8.8Z" fill="#ffff00" stroke="#000" stroke-width="1"/>
 <path d="M8.2 7.6 L15.6 0.8" stroke="#000" stroke-width=".9"/>
 <path d="M9.4 10.6 L15.6 4.6 L15.6 2.2 L8.4 8.8Z" fill="#f0f080"/>
 <path d="M6.4 5.2 L9 11 L2.6 13.6Z" fill="#ffb0a8"/>
 <path d="M7.4 8 L9 11 L3.2 13.4Z" fill="#ffa050"/>
 <path d="M0.4 15.6 L2 12.6 L3.4 13.8Z" fill="#000"/>
</svg>
<!-- 24 measure -->
<svg class="ic" style="left:489px;top:59px" viewBox="0 0 16 16">
 <rect x="0.4" y="0.2" width="4" height="15.6" fill="#f0f000"/>
 <rect x="0.4" y="0.2" width="1" height="15.6" fill="#b0a800"/>
 <rect x="4.2" y="0.2" width="1.2" height="15.6" fill="#606060"/>
 <path d="M0.6 0.5 H4.4 M2.6 3.4 H4.4 M2.6 6.4 H4.4 M2.6 9.4 H4.4 M2.6 12.4 H4.4 M0.6 15.5 H4.4" stroke="#000" stroke-width="1"/>
 <path d="M5 10.2 H14.8 L8.8 15.8 H5Z" fill="#f00"/>
 <path d="M8.4 11.8 L12 11 L8.8 15.6 L7 15.6Z" fill="#b00000"/>
 <path d="M6 11.4 L7 12.8 L6 14Z" fill="#a0a0a0"/>
 <path d="M5.2 8.2 L7.6 6.6" stroke="#000" stroke-width="1.1"/>
 <path d="M7.4 6.8 L11.6 3" stroke="#ff60ff" stroke-width="1.2"/>
 <path d="M8.2 7 L12.6 3.4 L13 4.4 L9 7.6Z" fill="#ffa0a0"/>
 <path d="M11.2 2.6 L13.6 0.4 L15.8 0.4 L15.8 2.4 L13 5Z" fill="#f09000"/>
 <path d="M9 7.8 L15.8 3 V5.4 L13 5.8Z" fill="#808080"/>
</svg>
<!-- 25 locator -->
<svg class="ic" style="left:509px;top:59px" viewBox="0 0 16 16">
 <rect x="1" y="0" width="15" height="15" fill="#fff"/>
 <path d="M0.6 0.2 V15.5 H16" stroke="#404040" stroke-width="1.1" fill="none"/>
 <rect x="3" y="0" width="12.8" height="12.8" fill="#00d000"/>
 <path d="M3 0 H6 L5 2 L3.6 2.4Z M6.4 1 L7.2 0 V8 L6 7Z M3 10 L5 8.8 L6.4 10.4 L5 12.8 H3Z M12.6 9 H15.8 V12.8 H13 L12 11Z M7 8.6 L8 9.8 L7 11Z" fill="#0010e0"/>
 <g fill="#c0a040"><rect x="4" y="4" width="1" height="1"/><rect x="3.4" y="7" width="1" height="1"/><rect x="7" y="12" width="1" height="1"/><rect x="10" y="10.6" width="1" height="1"/><rect x="5" y="1.6" width="1" height="1"/></g>
 <rect x="7.6" y="0.7" width="7.5" height="7.5" fill="#fff" stroke="#f00" stroke-width="1.4"/>
 <path d="M9 2 L11 1.6 L13.6 4.6 L14.6 4.6 M8.6 4.6 L10.4 4.2 L12.6 6.8" stroke="#000" stroke-width="1" fill="none"/>
</svg>
<!-- help -->
<svg class="ic" style="left:941px;top:59px" viewBox="0 0 16 16">
 <path d="M4.6 5 C4.6 2.6 6.6 2 8.5 2 C10.8 2 12.4 3.2 12.2 5 C12 6.8 10 7.6 8.5 9.4 L8.5 10.8" stroke="#000" stroke-width="3.2" fill="none" stroke-linecap="round" stroke-linejoin="round"/>
 <circle cx="8.5" cy="14" r="2.1" fill="#000"/>
 <path d="M4.6 5 C4.6 2.6 6.6 2 8.5 2 C10.8 2 12.4 3.2 12.2 5 C12 6.8 10 7.6 8.5 9.4 L8.5 10.8" stroke="#ff0" stroke-width="1.4" fill="none" stroke-linecap="round" stroke-linejoin="round"/>
 <circle cx="8.5" cy="14" r="1" fill="#ff0"/>
</svg>

<!-- ===== bottom-left icons (16x16 at y=676) ===== -->
<svg class="ic" style="left:5px;top:676px" viewBox="0 0 16 16" shape-rendering="crispEdges">
 <rect x="0" y="0" width="16" height="15" fill="#c4c4c0"/>
 <rect x="14" y="1" width="2" height="14" fill="#808080"/>
 <rect x="1" y="13" width="15" height="2" fill="#707070"/>
 <rect x="1" y="1" width="13" height="12" fill="#fff"/>
 <rect x="1" y="2" width="4" height="3" fill="#00f"/>
 <rect x="1" y="6" width="4" height="3" fill="#00a000"/>
 <rect x="1" y="10" width="4" height="3" fill="#f00"/>
 <g shape-rendering="auto" fill="#000">
 <path d="M6 4.4 H7 L7.8 2.8 L8.8 4 H9.6 L10.4 2.8 L11.2 4 H12 L12.8 2.8 L13.6 4.4 H14 V5.2 H6Z"/>
 <path d="M6 8.4 H7.4 L8.2 6.8 L9.2 8.2 H10.4 L11.2 6.8 L12 8.2 H14 V9.2 H6Z"/>
 <path d="M6 12.2 H7 L7.8 10.6 L8.8 12 H9.6 L10.4 10.6 L11.2 12 H12 L12.8 10.6 L13.6 12.2 H14 V13 H6Z"/>
 </g>
</svg>
<svg class="ic" style="left:28px;top:676px" viewBox="0 0 16 16" shape-rendering="crispEdges">
 <rect x="0.5" y="0.5" width="12" height="11" fill="#ffffb0" stroke="#403434"/>
 <rect x="3.5" y="3.5" width="12" height="12" fill="#00b0ff" stroke="#403434"/>
 <rect x="4" y="4" width="8" height="7" fill="#b0ffa8"/>
 <rect x="0" y="15" width="1" height="1" fill="#404040"/>
</svg>
<svg class="ic" style="left:51px;top:676px" viewBox="0 0 16 16">
 <path d="M10.8 10.6 L15.3 14.9" stroke="#000" stroke-width="2.2"/>
 <path d="M11.5 10.4 L15.7 14.3" stroke="#10a8a8" stroke-width="1.4" stroke-dasharray="1 .5"/>
 <circle cx="6.7" cy="6.3" r="6" fill="#fff" stroke="#000" stroke-width="1.2"/>
 <circle cx="7" cy="6.5" r="4.2" fill="#b0fcfc"/>
</svg>
<svg class="ic" style="left:74px;top:676px" viewBox="0 0 16 16" shape-rendering="crispEdges">
 <rect x="0" y="0" width="16" height="16" fill="#f4f4f4"/>
 <rect x="0" y="0" width="2" height="7" fill="#c8c8c8"/>
 <rect x="2" y="0" width="14" height="2" fill="#600000"/>
 <rect x="2" y="2" width="13" height="11" fill="#fff"/>
 <rect x="15" y="2" width="1" height="12" fill="#202020"/>
 <rect x="8" y="13" width="8" height="1" fill="#202020"/>
 <rect x="4" y="2" width="10" height="10" fill="#00d000"/>
 <path d="M4 2 H7 L6 5 L4 6Z M10 2 H14 V5 L12 6 L11 4Z M9 9 L11 8 L14 8.6 V12 H10Z" fill="#0040ff" shape-rendering="auto"/>
 <path d="M8 3 L10 5 L9 8 L10 10" stroke="#806020" stroke-width="1" fill="none" shape-rendering="auto"/>
 <rect x="0" y="7" width="7" height="1.4" fill="#600000"/>
 <rect x="0" y="8.4" width="7" height="6" fill="#fff"/>
 <rect x="1" y="9" width="5" height="4.6" fill="#00c000"/>
 <path d="M1 9 H6 V10.4 L3 10.6 L1 11.6Z" fill="#0060ff" shape-rendering="auto"/>
 <rect x="1" y="14.4" width="6" height="1" fill="#202020"/>
 <rect x="7" y="15" width="9" height="1" fill="#c0c0c0"/>
</svg>
<svg class="ic" style="left:97px;top:676px" viewBox="0 0 16 16">
 <rect x="9" y="0" width="7" height="7" fill="#00a000"/>
 <path d="M16 0 V4 L13 5.5 L12 3 L14 0Z" fill="#4000ff"/>
 <path d="M9.5 1 L11 0 L12.5 2 L11 4Z" fill="#00e000"/>
 <rect x="9" y="7" width="7" height="2.4" fill="#fff"/>
 <rect x="10" y="9.4" width="6" height=".8" fill="#909090"/>
 <path d="M10.6 10.8 L15.2 15.2" stroke="#000" stroke-width="2.4"/>
 <path d="M11.3 10.5 L15.6 14.6" stroke="#10a8a8" stroke-width="1.5" stroke-dasharray="1 .5"/>
 <circle cx="6.5" cy="6.3" r="6" fill="#fff" stroke="#000" stroke-width="1.2"/>
 <path d="M4.2 1.4 C6 0.6 8.5 0.6 10.3 2.2 C11.6 3.6 12 5 11.9 7 L4.2 7Z" fill="#00e000"/>
 <path d="M4.2 4.5 C5.5 6 7.5 6.2 9.5 5.2 L11 4.6 L11.9 7 H4.2Z" fill="#4000ff"/>
 <path d="M7 5.8 C8.5 6 10 5.4 11 4.4 L11.6 5.8 C10 6.6 8.4 6.8 7 5.8Z" fill="#20a0ff"/>
 <path d="M1.4 4.5 C1 6 1 7.5 1.6 9 M3 10.2 H8.6" stroke="#7ce0e0" stroke-width="1" fill="none"/>
 <path d="M2.4 9.2 C3.4 11.4 6.2 12.2 8.6 11.4 C6.5 10.8 4 10.6 2.4 9.2Z" fill="#c0fcfc"/>
</svg>
<svg class="ic" style="left:120px;top:676px" viewBox="0 0 16 16">
 <path d="M10.6 10.8 L15.2 15.2" stroke="#000" stroke-width="2.4"/>
 <path d="M11.3 10.5 L15.6 14.6" stroke="#10a8a8" stroke-width="1.5" stroke-dasharray="1 .5"/>
 <circle cx="6.5" cy="6.3" r="6" fill="#c0fcfc" stroke="#000" stroke-width="1.2"/>
 <circle cx="6.5" cy="6.3" r="4.4" fill="none" stroke="#fff" stroke-width="1.2" stroke-dasharray="6 3"/>
 <path d="M3.2 6.4 H10 M6.6 3.1 V9.5" stroke="#000" stroke-width="2.8"/>
</svg>
<!-- status icon -->
<svg class="ic" style="left:268px;top:700px;width:18px;height:18px" viewBox="0 0 18 18">
 <path d="M9.4 7.6 C11 7 12 7.6 12 9.4 C12 11.8 14.6 12.6 14.8 9.8 L14.8 6" stroke="#808080" stroke-width="1" fill="none"/>
 <path d="M1.2 11.6 L5.6 7.4 L9.4 7.8 L10.2 10.6 L5 15.8 L2.4 15Z" fill="#10c0c8"/>
 <path d="M1.2 11.6 L5.6 7.4 L9.4 7.8 L5 12Z" fill="#50dce4"/>
 <path d="M1.2 11.6 L5 12 L5 15.8 L2.4 15Z" fill="#00989c"/>
 <path d="M9 4 H17 M13 0 V8" stroke="#f00" stroke-width="2"/>
 <rect x="12.2" y="3.2" width="1.6" height="1.6" fill="#fff"/>
</svg>

</div></div>
</body></html>
